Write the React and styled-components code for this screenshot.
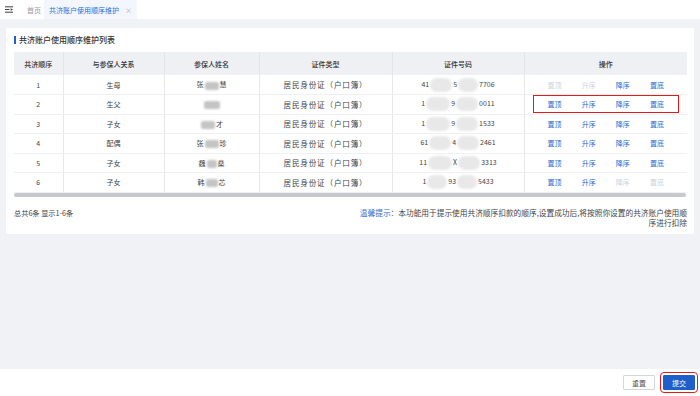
import React from "react";
import styled, { createGlobalStyle } from "styled-components";

const GlobalStyle = createGlobalStyle`
  html, body {
    margin: 0;
    padding: 0;
    background: #f0f2f5;
    font-family: "Noto Sans CJK SC", "Noto Sans", sans-serif;
    color: #333;
  }
`;

const rows = [
  { no: 1, rel: "生母", name: ["张", 14, "慧"], id: ["41", 22, "5", 20, "7706"], ops: [false, false, true, true] },
  { no: 2, rel: "生父", name: ["", 16, ""], id: ["1", 24, "9", 22, "0011"], ops: [true, true, true, true], mark: true },
  { no: 3, rel: "子女", name: ["", 14, "才"], id: ["1", 24, "9", 22, "1533"], ops: [true, true, true, true] },
  { no: 4, rel: "配偶", name: ["张", 14, "珍"], id: ["61", 22, "4", 22, "2461"], ops: [true, true, true, true] },
  { no: 5, rel: "子女", name: ["魏", 10, "燊"], id: ["11", 24, "X", 22, "3313"], ops: [true, true, true, true] },
  { no: 6, rel: "子女", name: ["韩", 12, "芯"], id: ["1", 20, "93", 20, "5433"], ops: [true, true, false, false] },
];

const opNames = ["置顶", "升序", "降序", "置底"];

export default function App() {
  return (
    <Page>
      <GlobalStyle />
      <TopBar>
        <MenuIcon viewBox="0 0 10 8">
          <rect x="0" y="0" width="10" height="1.3" fill="#444" />
          <rect x="0" y="3.3" width="5.5" height="1.3" fill="#444" />
          <path d="M7 2.4 L10 4 L7 5.6 Z" fill="#444" />
          <rect x="0" y="6.7" width="10" height="1.3" fill="#444" />
        </MenuIcon>
        <Tab>首页</Tab>
        <Tab active>
          共济账户使用顺序维护
          <Close>×</Close>
        </Tab>
      </TopBar>

      <Main>
        <Card>
          <Title>共济账户使用顺序维护列表</Title>
          <Table>
            <colgroup>
              <col style={{ width: 49 }} />
              <col style={{ width: 101 }} />
              <col style={{ width: 95 }} />
              <col style={{ width: 133 }} />
              <col style={{ width: 132 }} />
              <col style={{ width: 163 }} />
            </colgroup>
            <thead>
              <tr>
                <Th>共济顺序</Th>
                <Th>与参保人关系</Th>
                <Th>参保人姓名</Th>
                <Th>证件类型</Th>
                <Th>证件号码</Th>
                <Th>操作</Th>
              </tr>
            </thead>
            <tbody>
              {rows.map((r) => (
                <tr key={r.no}>
                  <Td>{r.no}</Td>
                  <Td>{r.rel}</Td>
                  <Td>
                    {r.name[0]}
                    <Mask w={r.name[1]} />
                    {r.name[2]}
                  </Td>
                  <Td wide>居民身份证（户口簿）</Td>
                  <Td>
                    {r.id[0]}
                    <Mask w={r.id[1]} round />
                    {r.id[2]}
                    <Mask w={r.id[3]} round />
                    {r.id[4]}
                  </Td>
                  <Td>
                    <Ops mark={r.mark}>
                      {opNames.map((o, i) => (
                        <OpLink key={o} enabled={r.ops[i]}>
                          {o}
                        </OpLink>
                      ))}
                    </Ops>
                  </Td>
                </tr>
              ))}
            </tbody>
          </Table>
          <ScrollBar />
          <Footer>
            <Total>总共6条 显示1-6条</Total>
            <Tip>
              <TipLabel>温馨提示：</TipLabel>
              本功能用于提示使用共济顺序扣款的顺序,设置成功后,将按照你设置的共济账户使用顺
              <br />
              序进行扣除
            </Tip>
          </Footer>
        </Card>
      </Main>

      <BottomBar>
        <Button>重置</Button>
        <Button primary>提交</Button>
      </BottomBar>
    </Page>
  );
}

const Page = styled.div`
  width: 700px;
  height: 396px;
  display: flex;
  flex-direction: column;
  overflow: hidden;
`;

const TopBar = styled.div`
  height: 19px;
  background: #fff;
  display: flex;
  align-items: stretch;
  padding-left: 5px;
`;

const MenuIcon = styled.svg`
  width: 8px;
  height: 7px;
  align-self: center;
  margin-right: 11px;
`;

const Tab = styled.div`
  display: flex;
  align-items: center;
  padding: 0 ${(p) => (p.active ? "5px" : "3px")};
  font-size: 7px;
  color: ${(p) => (p.active ? "#2a6fd6" : "#999")};
  background: ${(p) => (p.active ? "#f3f7fd" : "transparent")};
`;

const Close = styled.span`
  color: #aaa;
  font-size: 7px;
  margin-left: 6px;
`;

const Main = styled.div`
  flex: 1;
  background: #f0f2f5;
  padding: 9px 6px 0 6px;
`;

const Card = styled.div`
  background: #fff;
  border-radius: 2px;
  padding: 6px 7px 6px 8px;
`;

const Title = styled.div`
  height: 12px;
  line-height: 12px;
  font-size: 8px;
  font-weight: 500;
  color: #333;
  display: flex;
  align-items: center;
  margin-bottom: 6px;

  &::before {
    content: "";
    width: 2px;
    height: 8px;
    background: #1f5fc9;
    margin-right: 3px;
  }
`;

const Table = styled.table`
  width: 673px;
  table-layout: fixed;
  border-collapse: collapse;
  font-size: 7px;
`;

const Th = styled.th`
  height: 23px;
  padding: 0;
  background: #eef0f4;
  font-weight: 500;
  color: #333;
  text-align: center;
  border-right: 1px solid #e2e5ea;

  &:last-child {
    border-right: none;
  }
`;

const Td = styled.td`
  height: 19.5px;
  padding: 0;
  box-sizing: border-box;
  text-align: center;
  color: #444;
  white-space: nowrap;
  font-size: ${(p) => (p.wide ? "7.6px" : "7px")};
  letter-spacing: ${(p) => (p.wide ? "0.8px" : "0")};
  border-right: 1px solid #e6e8eb;
  border-bottom: 1px solid #eef0f3;

  &:last-child {
    border-right: none;
  }
`;

const Mask = styled.span`
  display: inline-block;
  vertical-align: middle;
  width: ${(p) => p.w}px;
  height: ${(p) => (p.round ? 14 : 8)}px;
  background: ${(p) => (p.round ? "#e8e8e8" : "#c4c4c4")};
  border-radius: ${(p) => (p.round ? "7px" : "2px")};
  filter: blur(1.2px);
  margin: 0 1px;
`;

const Ops = styled.div`
  display: grid;
  grid-template-columns: repeat(4, 1fr);
  align-items: center;
  height: 16px;
  margin: 0 9px;
  padding: 0 4px;
  outline: ${(p) => (p.mark ? "1.5px solid #e21b1b" : "none")};
`;

const OpLink = styled.span`
  color: ${(p) => (p.enabled ? "#2d6bd0" : "#cfd3da")};
  text-align: center;
`;

const ScrollBar = styled.div`
  height: 4px;
  width: 672px;
  border-radius: 2px;
  background: #c6c8cc;
`;

const Footer = styled.div`
  display: flex;
  justify-content: space-between;
  align-items: flex-start;
  margin-top: 11px;
  width: 673px;
`;

const Total = styled.div`
  font-size: 7.2px;
  line-height: 10px;
  color: #444;
`;

const Tip = styled.div`
  font-size: 7.7px;
  line-height: 10px;
  color: #444;
  text-align: right;
`;

const TipLabel = styled.span`
  color: #2d6bd0;
`;

const BottomBar = styled.div`
  height: 27px;
  background: #fff;
  display: flex;
  justify-content: flex-end;
  align-items: center;
  gap: 8px;
  padding-right: 5px;
`;

const Button = styled.button`
  width: 32px;
  height: 15px;
  padding: 0;
  font-family: inherit;
  font-size: 7px;
  border-radius: 1px;
  cursor: pointer;
  border: 1px solid ${(p) => (p.primary ? "#1f5fc9" : "#d3d6db")};
  background: ${(p) => (p.primary ? "#1f5fc9" : "#fff")};
  color: ${(p) => (p.primary ? "#fff" : "#555")};
  outline: ${(p) => (p.primary ? "1.5px solid #e21b1b" : "none")};
  outline-offset: 2.5px;
`;
